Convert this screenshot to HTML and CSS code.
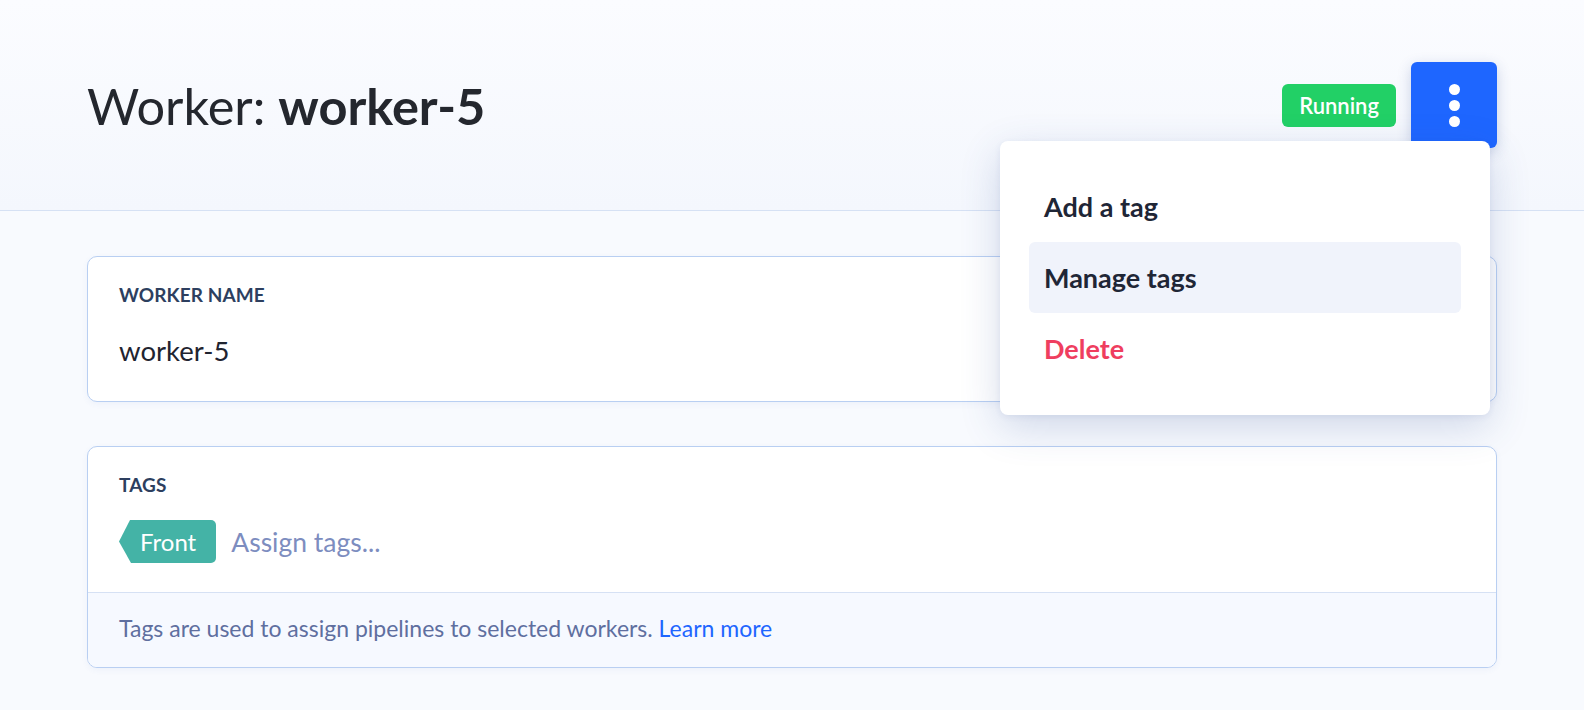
FILE: index.html
```html
<!DOCTYPE html>
<html lang="en">
<head>
<meta charset="utf-8">
<title>Worker: worker-5</title>
<link rel="stylesheet" href="styles.css">
</head>
<body>
<header class="page-header">
  <div class="container header-inner">
    <h1 class="title">Worker: <strong>worker-5</strong></h1>
    <div class="header-actions">
      <span class="badge">Running</span>
      <button class="kebab" aria-label="More actions">
        <span class="dot"></span><span class="dot"></span><span class="dot"></span>
      </button>
      <div class="dropdown">
        <div class="menu-item">Add a tag</div>
        <div class="menu-item active">Manage tags</div>
        <div class="menu-item danger">Delete</div>
      </div>
    </div>
  </div>
</header>
<main class="container content">
  <section class="card">
    <div class="card-body">
      <div class="label">WORKER NAME</div>
      <div class="value">worker-5</div>
    </div>
  </section>
  <section class="card">
    <div class="card-body tags-body">
      <div class="label">TAGS</div>
      <div class="tag-row">
        <span class="tag">Front</span>
        <span class="placeholder">Assign tags...</span>
      </div>
    </div>
    <div class="card-footer">Tags are used to assign pipelines to selected workers. <a class="link" href="#">Learn more</a></div>
  </section>
</main>
</body>
</html>
```

FILE: styles.css
```css
* { box-sizing: border-box; }
html, body { margin: 0; padding: 0; }
body {
  font-family: Lato, "Noto Sans", sans-serif;
  background: #f8fafe;
  color: #1f2430;
  height: 710px;
  overflow: hidden;
}
.container {
  width: 1410px;
  margin: 0 auto;
}
.page-header {
  height: 211px;
  background: linear-gradient(180deg, #fbfcff 0%, #f4f7fd 100%);
  border-bottom: 1px solid #d6e1f4;
}
.header-inner {
  height: 210px;
  display: flex;
  align-items: center;
  justify-content: space-between;
}
.title {
  margin: 0;
  font-size: 50.5px;
  font-weight: 400;
  color: #24272e;
}
.title strong { font-weight: 700; }
.header-actions {
  position: relative;
  display: flex;
  align-items: center;
  gap: 15px;
}
.badge {
  display: inline-flex;
  align-items: center;
  height: 43px;
  padding: 0 17px;
  background: #22d066;
  color: #fff;
  font-size: 22px;
  font-weight: 600;
  border-radius: 6px;
}
.kebab {
  width: 86px;
  height: 86px;
  border: 0;
  border-radius: 6px;
  background: #1e66ff;
  display: flex;
  flex-direction: column;
  align-items: center;
  justify-content: center;
  gap: 5px;
  box-shadow: 0 4px 14px rgba(40, 70, 140, 0.22);
  padding: 0;
}
.dot {
  width: 11px;
  height: 11px;
  border-radius: 50%;
  background: #fff;
}
.dropdown {
  position: absolute;
  top: 79px;
  right: 7px;
  width: 490px;
  padding: 30px 29px 31px;
  background: #fff;
  border-radius: 8px;
  box-shadow: 0 12px 40px rgba(50, 80, 150, 0.2), 0 2px 6px rgba(50, 80, 150, 0.08);
  z-index: 10;
}
.menu-item {
  height: 71px;
  display: flex;
  align-items: center;
  padding: 0 15px;
  font-size: 27px;
  font-weight: 700;
  color: #1f2636;
  border-radius: 6px;
}
.menu-item.active { background: #f0f3fb; }
.menu-item.danger { color: #ef3e5f; }
.content {
  padding-top: 45px;
  display: flex;
  flex-direction: column;
  gap: 44px;
}
.card {
  background: #fff;
  border: 1px solid #b9cff2;
  border-radius: 10px;
  overflow: hidden;
  box-shadow: 0 2px 6px rgba(60, 100, 180, 0.06);
}
.card-body {
  padding: 26px 31px 34px;
}
.label {
  font-size: 19px;
  font-weight: 700;
  color: #2d3f5f;
  letter-spacing: 0.1px;
}
.value {
  margin-top: 28px;
  font-size: 27.5px;
  color: #1f2430;
}
.tags-body { padding-bottom: 29px; }
.tag-row {
  margin-top: 24px;
  display: flex;
  align-items: center;
  gap: 15px;
}
.tag {
  display: inline-flex;
  align-items: center;
  height: 43px;
  padding: 0 20px 0 21px;
  background: #44b3a6;
  color: #fff;
  font-size: 24px;
  border-radius: 5px;
  clip-path: polygon(11px 0, 100% 0, 100% 100%, 12px 100%, 0 50%);
}
.placeholder {
  font-size: 26.5px;
  color: #7d8dbf;
}
.card-footer {
  border-top: 1px solid #d6e1f4;
  background: #f6f9ff;
  padding: 21px 31px 25px;
  font-size: 23px;
  color: #5f6f9f;
}
.link {
  color: #1e66ff;
  text-decoration: none;
}
```
